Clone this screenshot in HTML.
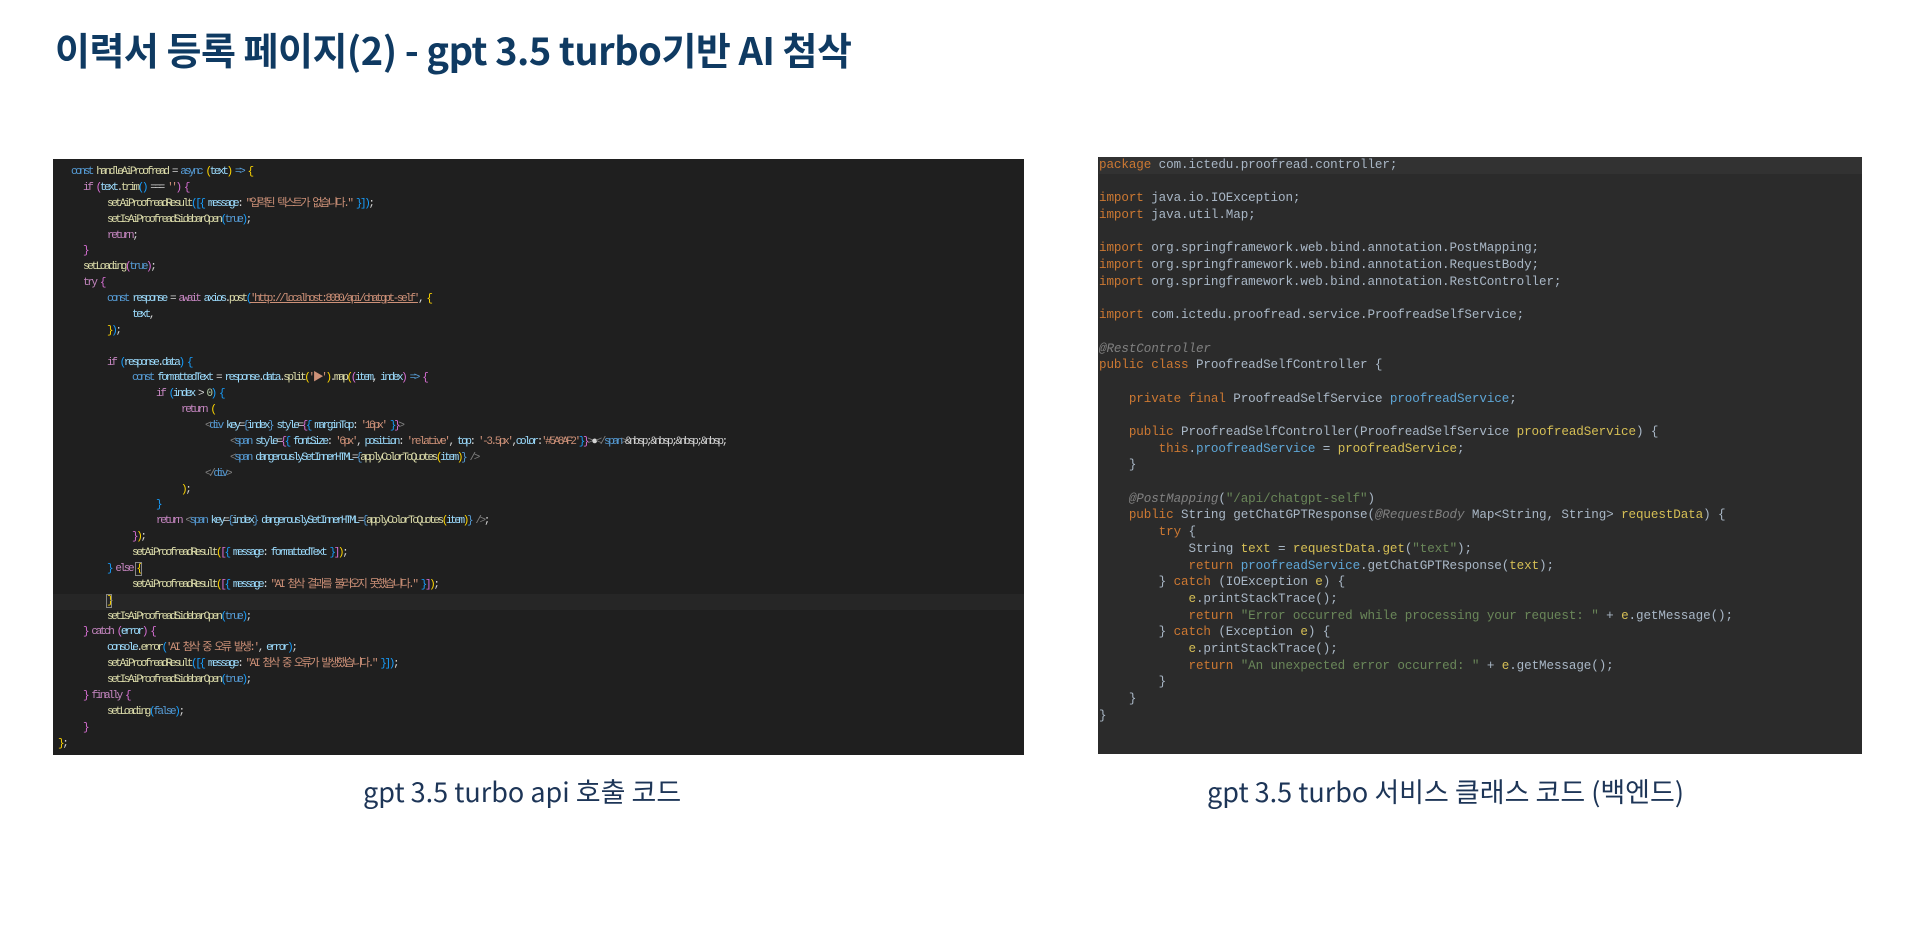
<!DOCTYPE html>
<html><head><meta charset="utf-8"><style>
body{margin:0;width:1919px;height:949px;background:#fff;position:relative;overflow:hidden;font-family:"Noto Sans CJK KR","Liberation Sans",sans-serif}
h1{position:absolute;left:55px;top:24px;margin:0;font-size:38px;font-weight:bold;color:#0f3a62;font-family:"Noto Sans CJK KR","Liberation Sans",sans-serif;letter-spacing:-0.5px;line-height:1.3}
.p1{position:absolute;left:53px;top:159px;width:971px;height:596px;background:#1f1f1f}
.p2{position:absolute;left:1098px;top:157px;width:764px;height:597px;background:#2b2b2b}
.c1{position:absolute;left:0;top:165px;font-family:"Liberation Mono","Noto Sans CJK KR",monospace;font-size:11px;letter-spacing:-2.4px;color:#d4d4d4}
.c1 div{height:15.88px;line-height:15.88px;white-space:pre}
.c2{position:absolute;left:1099px;top:157px;font-family:"Liberation Mono","Noto Sans CJK KR",monospace;font-size:12.6px;letter-spacing:-0.1px;color:#a9b7c6}
.c2 div{height:16.7px;line-height:16.7px;white-space:pre}
.k{color:#569cd6}.c{color:#c586c0}.f{color:#dcdcaa}.v{color:#9cdcfe}.s{color:#ce9178}.y{color:#ffd700}.m{color:#da70d6}.b{color:#179fff}.t{color:#808080}.g{color:#b5cea8}
.o{color:#cc7832}.a{color:#808080;font-style:italic}.j{color:#6a8759}.q{color:#5ea6d6}.w{color:#d6bf55}
.cap{position:absolute;top:771px;font-size:27px;color:#1d3557;font-family:"Noto Sans CJK KR","Liberation Sans",sans-serif;white-space:nowrap}
</style></head><body>
<h1>이력서 등록 페이지(2) - gpt 3.5 turbo기반 AI 첨삭</h1>
<div class="p1"></div>
<div class="p2"></div>
<div class="c1"><div style="padding-left:71px"><span class="k">const</span> <span class="f">handleAiProofread</span> = <span class="k">async</span> <span class="y">(</span><span class="v">text</span><span class="y">)</span> <span class="k">=&gt;</span> <span class="y">{</span></div><div style="padding-left:83px"><span class="c">if</span> <span class="m">(</span><span class="v">text</span>.<span class="f">trim</span><span class="b">()</span> === <span class="s">''</span><span class="m">)</span> <span class="m">{</span></div><div style="padding-left:107px"><span class="f">setAiProofreadResult</span><span class="b">([{</span> <span class="v">message</span>: <span class="s">"입력된 텍스트가 없습니다."</span> <span class="b">}])</span>;</div><div style="padding-left:107px"><span class="f">setIsAiProofreadSidebarOpen</span><span class="b">(</span><span class="k">true</span><span class="b">)</span>;</div><div style="padding-left:107px"><span class="c">return</span>;</div><div style="padding-left:83px"><span class="m">}</span></div><div style="padding-left:83px"><span class="f">setLoading</span><span class="m">(</span><span class="k">true</span><span class="m">)</span>;</div><div style="padding-left:83px"><span class="c">try</span> <span class="m">{</span></div><div style="padding-left:107px"><span class="k">const</span> <span class="v">response</span> = <span class="c">await</span> <span class="v">axios</span>.<span class="f">post</span><span class="b">(</span><span class="s" style="text-decoration:underline">'http://localhost:8080/api/chatgpt-self'</span>, <span class="y">{</span></div><div style="padding-left:132px"><span class="v">text</span>,</div><div style="padding-left:107px"><span class="y">}</span><span class="b">)</span>;</div><div></div><div style="padding-left:107px"><span class="c">if</span> <span class="b">(</span><span class="v">response</span>.<span class="v">data</span><span class="b">)</span> <span class="b">{</span></div><div style="padding-left:132px"><span class="k">const</span> <span class="v">formattedText</span> = <span class="v">response</span>.<span class="v">data</span>.<span class="f">split</span><span class="y">(</span><span class="s">'▶'</span><span class="y">)</span>.<span class="f">map</span><span class="y">(</span><span class="m">(</span><span class="v">item</span>, <span class="v">index</span><span class="m">)</span> <span class="k">=&gt;</span> <span class="m">{</span></div><div style="padding-left:156px"><span class="c">if</span> <span class="b">(</span><span class="v">index</span> &gt; <span class="g">0</span><span class="b">)</span> <span class="b">{</span></div><div style="padding-left:181px"><span class="c">return</span> <span class="y">(</span></div><div style="padding-left:205px"><span class="t">&lt;</span><span class="k">div</span> <span class="v">key</span>=<span class="k">{</span><span class="v">index</span><span class="k">}</span> <span class="v">style</span>=<span class="m">{</span><span class="b">{</span> <span class="v">marginTop</span>: <span class="s">'16px'</span> <span class="b">}</span><span class="m">}</span><span class="t">&gt;</span></div><div style="padding-left:230px"><span class="t">&lt;</span><span class="k">span</span> <span class="v">style</span>=<span class="m">{</span><span class="b">{</span> <span class="v">fontSize</span>: <span class="s">'6px'</span>, <span class="v">position</span>: <span class="s">'relative'</span>, <span class="v">top</span>: <span class="s">'-3.5px'</span>,<span class="v">color</span>:<span class="s">'#5A8AF2'</span><span class="b">}</span><span class="m">}</span><span class="t">&gt;</span>●<span class="t">&lt;/</span><span class="k">span</span><span class="t">&gt;</span>&amp;nbsp;&amp;nbsp;&amp;nbsp;&amp;nbsp;</div><div style="padding-left:230px"><span class="t">&lt;</span><span class="k">span</span> <span class="v">dangerouslySetInnerHTML</span>=<span class="k">{</span><span class="f">applyColorToQuotes</span><span class="y">(</span><span class="v">item</span><span class="y">)</span><span class="k">}</span> <span class="t">/&gt;</span></div><div style="padding-left:205px"><span class="t">&lt;/</span><span class="k">div</span><span class="t">&gt;</span></div><div style="padding-left:181px"><span class="y">)</span>;</div><div style="padding-left:156px"><span class="b">}</span></div><div style="padding-left:156px"><span class="c">return</span> <span class="t">&lt;</span><span class="k">span</span> <span class="v">key</span>=<span class="k">{</span><span class="v">index</span><span class="k">}</span> <span class="v">dangerouslySetInnerHTML</span>=<span class="k">{</span><span class="f">applyColorToQuotes</span><span class="y">(</span><span class="v">item</span><span class="y">)</span><span class="k">}</span> <span class="t">/&gt;</span>;</div><div style="padding-left:132px"><span class="m">}</span><span class="y">)</span>;</div><div style="padding-left:132px"><span class="f">setAiProofreadResult</span><span class="y">(</span><span class="m">[</span><span class="b">{</span> <span class="v">message</span>: <span class="v">formattedText</span> <span class="b">}</span><span class="m">]</span><span class="y">)</span>;</div><div style="padding-left:107px"><span class="b">}</span> <span class="c">else</span> <span class="y" style="outline:1px solid #888">{</span></div><div style="padding-left:132px"><span class="f">setAiProofreadResult</span><span class="y">(</span><span class="m">[</span><span class="b">{</span> <span class="v">message</span>: <span class="s">"AI 첨삭 결과를 불러오지 못했습니다."</span> <span class="b">}</span><span class="m">]</span><span class="y">)</span>;</div><div style="margin-left:53px;padding-left:54px;background:#262626;width:917px"><span class="y" style="outline:1px solid #888">}</span></div><div style="padding-left:107px"><span class="f">setIsAiProofreadSidebarOpen</span><span class="b">(</span><span class="k">true</span><span class="b">)</span>;</div><div style="padding-left:83px"><span class="m">}</span> <span class="c">catch</span> <span class="m">(</span><span class="v">error</span><span class="m">)</span> <span class="m">{</span></div><div style="padding-left:107px"><span class="v">console</span>.<span class="f">error</span><span class="b">(</span><span class="s">'AI 첨삭 중 오류 발생:'</span>, <span class="v">error</span><span class="b">)</span>;</div><div style="padding-left:107px"><span class="f">setAiProofreadResult</span><span class="b">([{</span> <span class="v">message</span>: <span class="s">"AI 첨삭 중 오류가 발생했습니다."</span> <span class="b">}])</span>;</div><div style="padding-left:107px"><span class="f">setIsAiProofreadSidebarOpen</span><span class="b">(</span><span class="k">true</span><span class="b">)</span>;</div><div style="padding-left:83px"><span class="m">}</span> <span class="c">finally</span> <span class="m">{</span></div><div style="padding-left:107px"><span class="f">setLoading</span><span class="b">(</span><span class="k">false</span><span class="b">)</span>;</div><div style="padding-left:83px"><span class="m">}</span></div><div style="padding-left:58px"><span class="y">}</span>;</div></div>
<div class="c2"><div style="background:#323232;width:763px"><span class="o">package</span> com.ictedu.proofread.controller;</div><div></div><div><span class="o">import</span> java.io.IOException;</div><div><span class="o">import</span> java.util.Map;</div><div></div><div><span class="o">import</span> org.springframework.web.bind.annotation.PostMapping;</div><div><span class="o">import</span> org.springframework.web.bind.annotation.RequestBody;</div><div><span class="o">import</span> org.springframework.web.bind.annotation.RestController;</div><div></div><div><span class="o">import</span> com.ictedu.proofread.service.ProofreadSelfService;</div><div></div><div><span class="a">@RestController</span></div><div><span class="o">public class</span> ProofreadSelfController {</div><div></div><div>    <span class="o">private final</span> ProofreadSelfService <span class="q">proofreadService</span>;</div><div></div><div>    <span class="o">public</span> ProofreadSelfController(ProofreadSelfService <span class="w">proofreadService</span>) {</div><div>        <span class="o">this</span>.<span class="q">proofreadService</span> = <span class="w">proofreadService</span>;</div><div>    }</div><div></div><div>    <span class="a">@PostMapping</span>(<span class="j">"/api/chatgpt-self"</span>)</div><div>    <span class="o">public</span> String getChatGPTResponse(<span class="a">@RequestBody</span> Map&lt;String, String&gt; <span class="w">requestData</span>) {</div><div>        <span class="o">try</span> {</div><div>            String <span class="w">text</span> = <span class="w">requestData</span>.<span class="w">get</span>(<span class="j">"text"</span>);</div><div>            <span class="o">return</span> <span class="q">proofreadService</span>.getChatGPTResponse(<span class="w">text</span>);</div><div>        } <span class="o">catch</span> (IOException <span class="w">e</span>) {</div><div>            <span class="w">e</span>.printStackTrace();</div><div>            <span class="o">return</span> <span class="j">"Error occurred while processing your request: "</span> + <span class="w">e</span>.getMessage();</div><div>        } <span class="o">catch</span> (Exception <span class="w">e</span>) {</div><div>            <span class="w">e</span>.printStackTrace();</div><div>            <span class="o">return</span> <span class="j">"An unexpected error occurred: "</span> + <span class="w">e</span>.getMessage();</div><div>        }</div><div>    }</div><div>}</div></div>
<div class="cap" style="left:363px">gpt 3.5 turbo api 호출 코드</div>
<div class="cap" style="left:1207px">gpt 3.5 turbo 서비스 클래스 코드 (백엔드)</div>
</body></html>
